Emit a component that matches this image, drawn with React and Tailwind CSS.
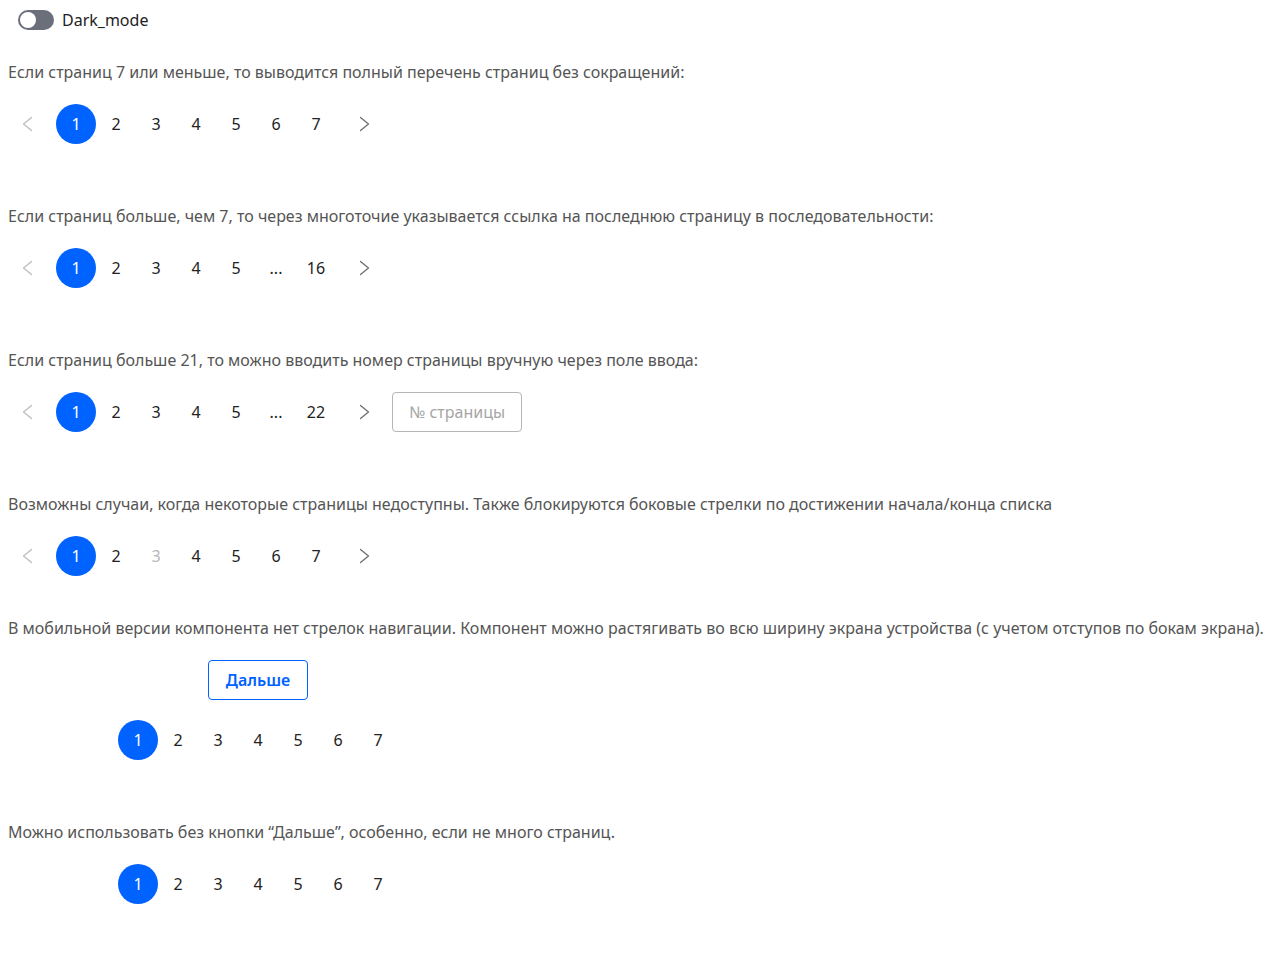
function Chevron({ dir }) {
    return (
        <svg width="11" height="16" viewBox="0 0 11 16" fill="none" stroke="currentColor" strokeWidth="1.3" strokeLinecap="round" strokeLinejoin="round">
            {dir === "left" ? <path d="M9.5 1.5 L1.5 8 L9.5 14.5" /> : <path d="M1.5 1.5 L9.5 8 L1.5 14.5" />}
        </svg>
    );
}

function PageItem({ value, active, disabled }) {
    return (
        <div
            className={
                "w-10 h-10 flex items-center justify-center rounded-full text-base " +
                (active ? "bg-[#0062ff] text-white" : disabled ? "text-[#b8b8b8]" : "text-[#222]")
            }>
            {value}
        </div>
    );
}

function Pagination({ items, disabled = [], arrows = true, input = false }) {
    return (
        <div className="flex flex-row items-center gap-2">
            {arrows && (
                <div className="w-10 h-10 flex items-center justify-center text-[#bdbdbd] pr-[2px]">
                    <Chevron dir="left" />
                </div>
            )}
            <div className="flex flex-row">
                {items.map((item, i) => (
                    <PageItem key={i} value={item} active={i === 0} disabled={disabled.includes(item)} />
                ))}
            </div>
            {arrows && (
                <div className="w-10 h-10 flex items-center justify-center text-[#6e6e6e]">
                    <Chevron dir="right" />
                </div>
            )}
            {input && (
                <input
                    className="w-[130px] h-10 rounded border border-[#b5b5b5] px-4 text-base text-[#222] placeholder:text-[#a6a6a6] outline-none"
                    placeholder="№ страницы"
                />
            )}
        </div>
    );
}

export default function App() {
    const seven = ["1", "2", "3", "4", "5", "6", "7"];
    return (
        <div className="bg-white min-h-[964px] px-2 font-['Noto_Sans',sans-serif] text-[#555]">
            <div className="flex flex-row items-center gap-2 pt-2 pl-[10px]">
                <div className="w-9 h-5 rounded-full bg-[#6b6f7a] flex items-center px-[2px]">
                    <div className="w-4 h-4 rounded-full bg-white" />
                </div>
                <span className="text-base leading-6 text-[#222]">Dark_mode</span>
            </div>

            <p className="mt-7 leading-6">Если страниц 7 или меньше, то выводится полный перечень страниц без сокращений:</p>
            <div className="mt-5">
                <Pagination items={seven} />
            </div>

            <p className="mt-[60px] leading-6">Если страниц больше, чем 7, то через многоточие указывается ссылка на последнюю страницу в последовательности:</p>
            <div className="mt-5">
                <Pagination items={["1", "2", "3", "4", "5", "...", "16"]} />
            </div>

            <p className="mt-[60px] leading-6">Если страниц больше 21, то можно вводить номер страницы вручную через поле ввода:</p>
            <div className="mt-5">
                <Pagination items={["1", "2", "3", "4", "5", "...", "22"]} input />
            </div>

            <p className="mt-[60px] leading-6">Возможны случаи, когда некоторые страницы недоступны. Также блокируются боковые стрелки по достижении начала/конца списка</p>
            <div className="mt-5">
                <Pagination items={seven} disabled={["3"]} />
            </div>

            <p className="mt-10 leading-6 whitespace-nowrap">В мобильной версии компонента нет стрелок навигации. Компонент можно растягивать во всю ширину экрана устройства (с учетом отступов по бокам экрана).</p>
            <div className="w-[500px] flex flex-col items-center mt-5 gap-5">
                <button className="w-[100px] h-10 rounded border border-[#0062ff] text-[#0062ff] font-semibold text-base">Дальше</button>
                <Pagination items={seven} arrows={false} />
            </div>

            <p className="mt-[60px] leading-6">Можно использовать без кнопки “Дальше”, особенно, если не много страниц.</p>
            <div className="w-[500px] flex flex-col items-center mt-5">
                <Pagination items={seven} arrows={false} />
            </div>
        </div>
    );
}
